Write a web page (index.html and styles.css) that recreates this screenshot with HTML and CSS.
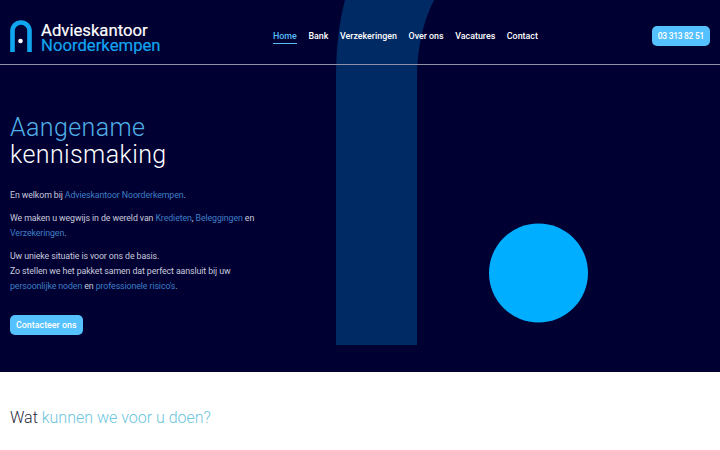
FILE: index.html
```html
<!DOCTYPE html>
<html lang="nl">
<head>
  <meta charset="UTF-8" />
  <meta name="viewport" content="width=device-width, initial-scale=1.0"/>
  <title>Advieskantoor Noorderkempen</title>
  <link rel="stylesheet" href="styles.css">
</head>
<body>

<div class="top">
  <!-- big door shape behind header and hero -->
  <svg class="door" width="720" height="372" viewBox="0 0 720 372">
    <path d="M336 345V78C336 48 339 22 345 0H434C423 22 417 48 417 78V345Z" fill="#002a63"/>
    <circle cx="538.5" cy="273" r="49.5" fill="#00aeff"/>
  </svg>

  <header class="site-header">
    <a class="logo" href="#">
      <svg width="22" height="32" viewBox="0 0 22 32">
        <path d="M2.500 32V11A8.500 8.500 0 0 1 19.500 11V32" fill="none" stroke="#12a5ef" stroke-width="4.600"/>
        <circle cx="10.500" cy="21" r="2.300" fill="#fff"/>
      </svg>
      <div class="logo-text">
        <span>Advieskantoor</span>
        <span class="logo-blue">Noorderkempen</span>
      </div>
    </a>
    <nav class="nav">
      <a class="active" href="#">Home</a>
      <a href="#">Bank</a>
      <a href="#">Verzekeringen</a>
      <a href="#">Over ons</a>
      <a href="#">Vacatures</a>
      <a href="#">Contact</a>
    </nav>
    <a class="btn" href="#">03 313 82 51</a>
  </header>

  <section class="hero">
    <h1><span class="blue">Aangename</span><br>kennismaking</h1>
    <p>En welkom bij <a href="#">Advieskantoor Noorderkempen</a>.</p>
    <p>We maken u wegwijs in de wereld van <a href="#">Kredieten</a>, <a href="#">Beleggingen</a> en <a href="#">Verzekeringen</a>.</p>
    <p>Uw unieke situatie is voor ons de basis.<br>Zo stellen we het pakket samen dat perfect aansluit bij uw <a href="#">persoonlijke noden</a> en <a href="#">professionele risico's</a>.</p>
    <a class="btn hero-btn" href="#">Contacteer ons</a>
  </section>
</div>

<section class="services">
  <h2>Wat <span>kunnen we voor u doen?</span></h2>
</section>

</body>
</html>
```

FILE: styles.css
```css
body {
  margin: 0;
  font-family: 'Roboto', sans-serif;
  background: #fff;
  color: #222;
  overflow: hidden;
}

a {
  text-decoration: none;
}

.top {
  position: relative;
  height: 372px;
  background: #000033;
  color: #fff;
  overflow: hidden;
}

.door {
  position: absolute;
  left: 0;
  top: 0;
}

.site-header {
  position: relative;
  display: flex;
  align-items: center;
  box-sizing: border-box;
  height: 65px;
  padding: 8px 10px 0;
  border-bottom: 1px solid #8f92a8;
}

.logo {
  display: flex;
  align-items: center;
  gap: 9px;
  width: 263px;
  color: #fff;
}

.logo-text {
  display: flex;
  flex-direction: column;
  font-size: 16.700px;
  font-weight: 400;
  line-height: 15px;
  padding-top: 3px;
  -webkit-text-stroke: 0.200px currentColor;
}

.logo-blue {
  color: #12a5ef;
}

.nav {
  display: flex;
  gap: 11.600px;
  flex: 1;
  padding-top: 1px;
  font-size: 8.900px;
  font-weight: 500;
}

.nav a {
  color: #fff;
  padding: 2px 0;
  border-bottom: 1px solid transparent;
}

.nav a.active {
  color: #56bdf5;
  border-bottom-color: #56bdf5;
}

.btn {
  display: inline-block;
  background: #55c1ff;
  color: #fff;
  font-size: 8.500px;
  font-weight: 500;
  letter-spacing: -0.300px;
  padding: 5px 6px;
  line-height: 10px;
  border-radius: 5px;
}

.hero {
  position: relative;
  padding: 49px 10px 0;
  width: 250px;
}

.hero h1 {
  margin: 0 0 20px;
  font-size: 25px;
  font-weight: 300;
  line-height: 27px;
  letter-spacing: 0.400px;
}

.blue {
  color: #4fb0e6;
}

.hero p {
  margin: 0 0 8.500px;
  font-size: 8.800px;
  letter-spacing: -0.100px;
  line-height: 14.700px;
  color: #c9cadb;
}

.hero p a {
  color: #3f7fc4;
}

.hero-btn {
  margin-top: 13px;
  font-size: 8.900px;
  letter-spacing: 0;
}

.services {
  padding: 35px 10px 0;
}

.services h2 {
  margin: 0;
  font-size: 16px;
  font-weight: 300;
  line-height: 22px;
  color: #2a2a40;
}

.services h2 span {
  color: #6cc5dd;
}
```
